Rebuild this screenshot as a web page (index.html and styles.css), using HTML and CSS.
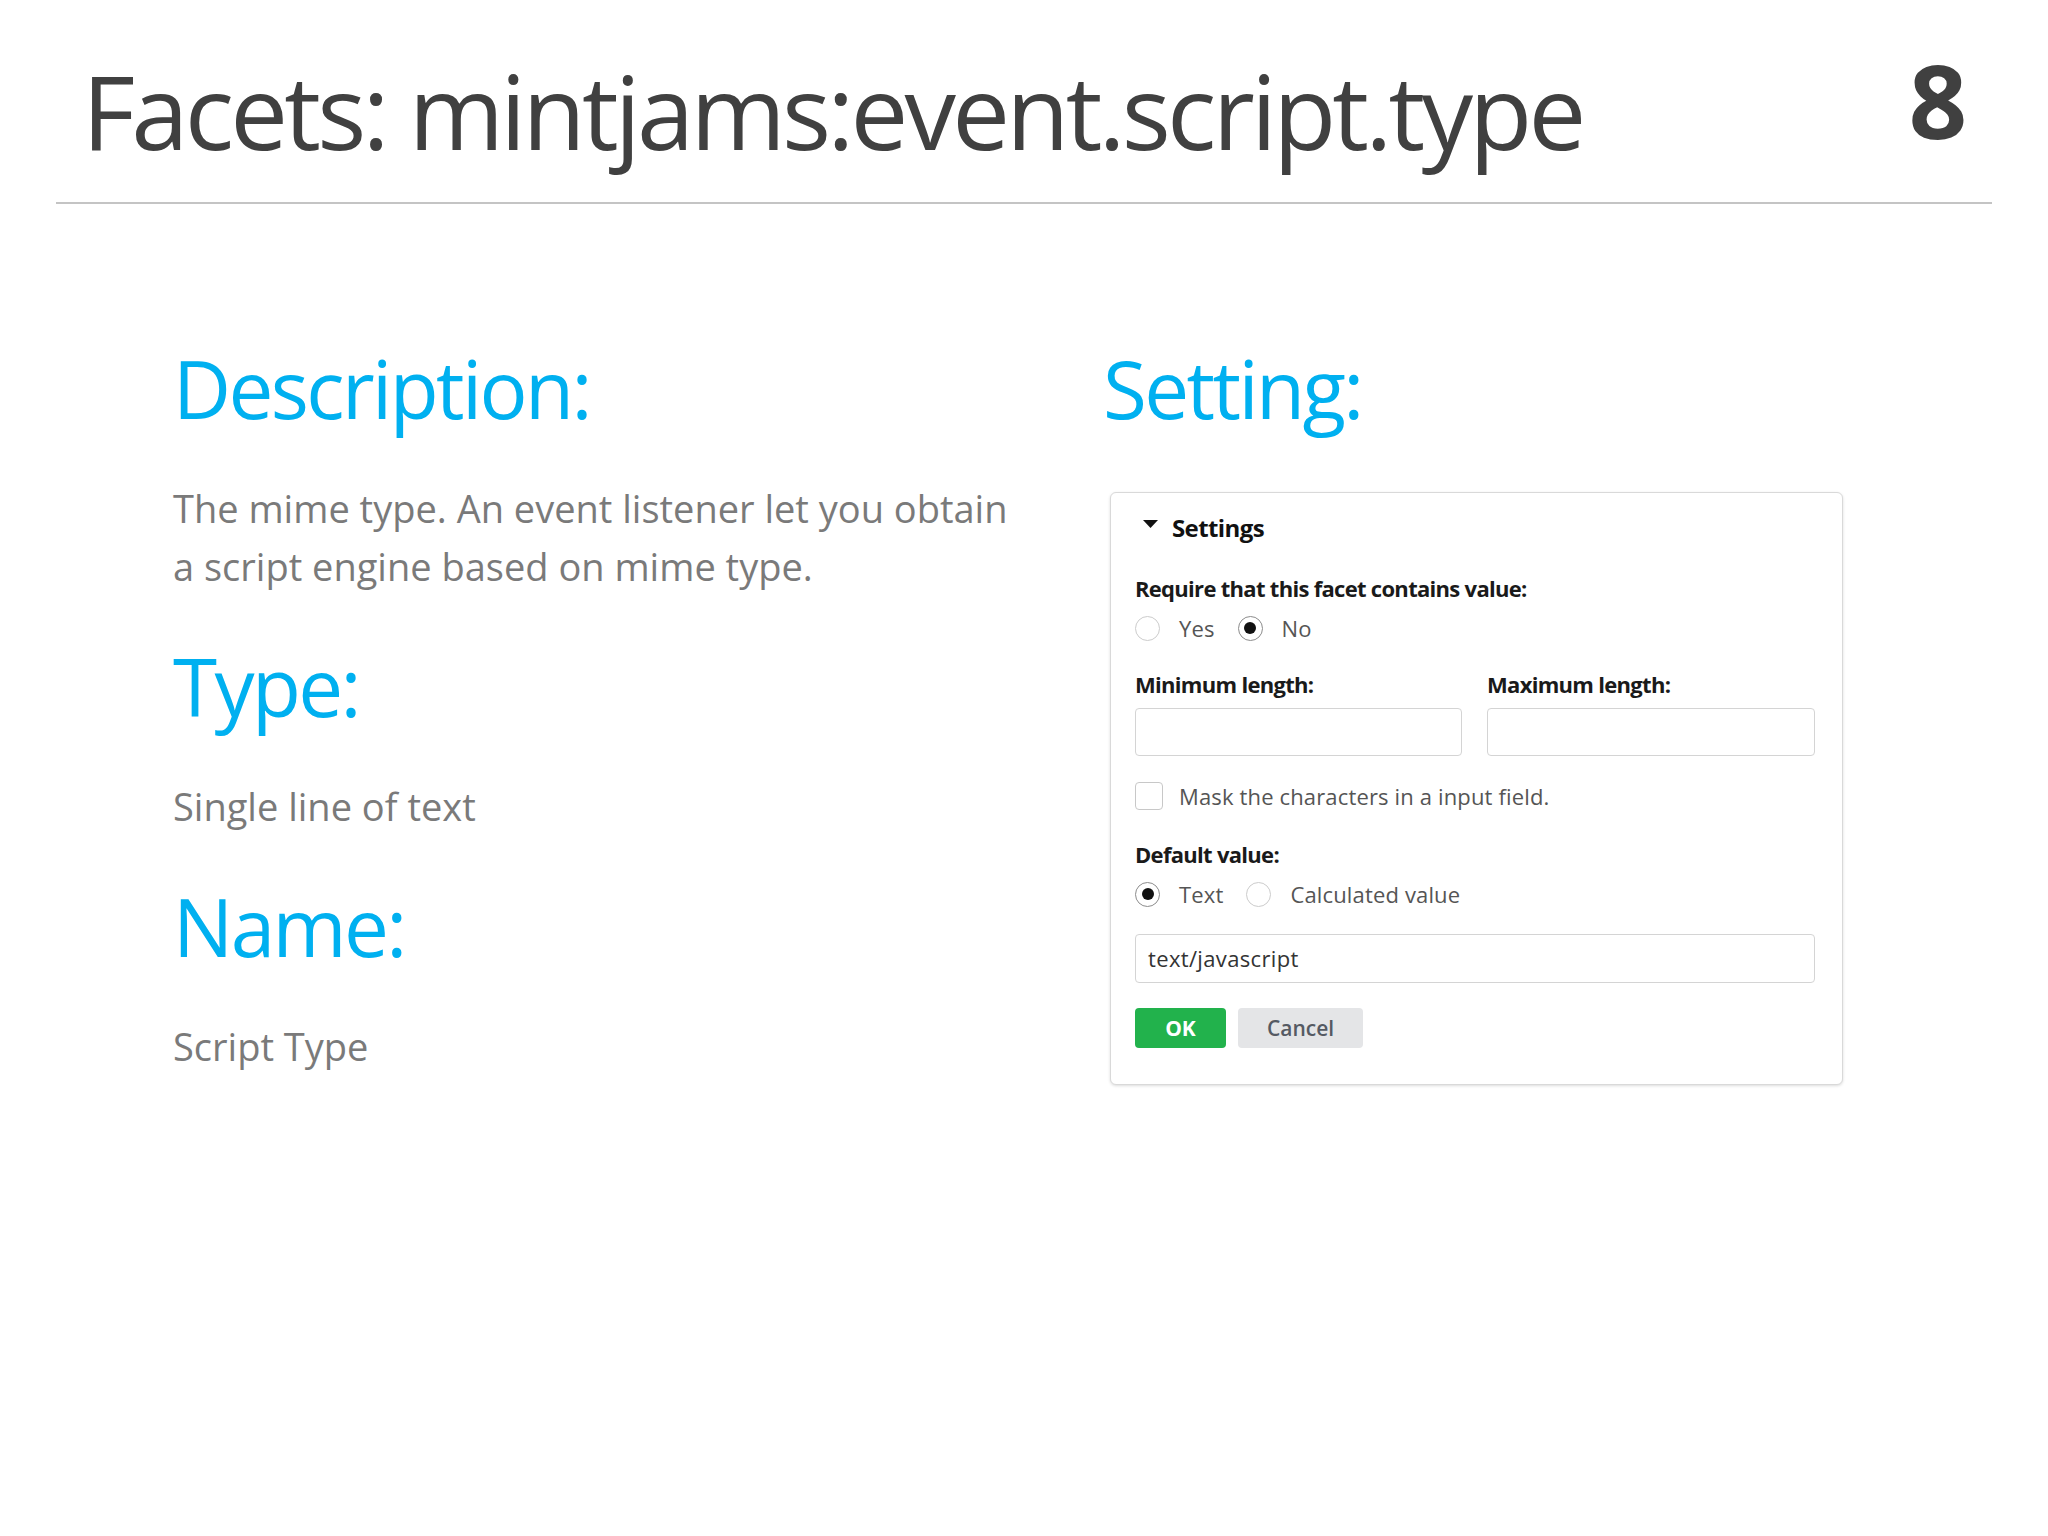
FILE: index.html
```html
<!DOCTYPE html>
<html lang="en">
<head>
<meta charset="utf-8">
<title>Facets: mintjams:event.script.type</title>
<link rel="stylesheet" href="styles.css">
</head>
<body>
<div class="slide">
  <header class="slide-header">
    <h1 class="slide-title">Facets: mintjams:event.script.type</h1>
    <div class="slide-number">8</div>
  </header>
  <main class="slide-body">
    <section class="col-left">
      <h2 class="heading">Description:</h2>
      <p class="text">The mime type. An event listener let you obtain<br>a script engine based on mime type.</p>
      <h2 class="heading heading-next">Type:</h2>
      <p class="text">Single line of text</p>
      <h2 class="heading heading-next">Name:</h2>
      <p class="text">Script Type</p>
    </section>
    <section class="col-right">
      <h2 class="heading">Setting:</h2>
      <div class="panel">
        <div class="panel-head">
          <svg class="caret" width="15" height="8" viewBox="0 0 15 8"><polygon points="0,0 15,0 7.5,8" fill="#111"/></svg>
          <span class="panel-title">Settings</span>
        </div>
        <div class="label label-first">Require that this facet contains value:</div>
        <div class="options">
          <span class="radio"></span><span class="opt">Yes</span>
          <span class="radio checked"></span><span class="opt">No</span>
        </div>
        <div class="pair">
          <div class="field">
            <div class="label">Minimum length:</div>
            <div class="input"></div>
          </div>
          <div class="field">
            <div class="label">Maximum length:</div>
            <div class="input"></div>
          </div>
        </div>
        <div class="check-row">
          <span class="checkbox"></span><span class="opt">Mask the characters in a input field.</span>
        </div>
        <div class="label label-default">Default value:</div>
        <div class="options">
          <span class="radio checked"></span><span class="opt">Text</span>
          <span class="radio"></span><span class="opt">Calculated value</span>
        </div>
        <div class="input input-text">text/javascript</div>
        <div class="buttons">
          <span class="btn btn-ok">OK</span>
          <span class="btn btn-cancel">Cancel</span>
        </div>
      </div>
    </section>
  </main>
</div>
</body>
</html>
```

FILE: styles.css
```css
html, body {
  margin: 0;
  padding: 0;
  background: #ffffff;
}

.slide {
  width: 2048px;
  height: 1536px;
  background: #ffffff;
  font-family: "Open Sans", "Noto Sans", sans-serif;
  overflow: hidden;
}

.slide-header {
  margin: 0 56px;
  padding: 48px 25px 30px 26px;
  border-bottom: 2px solid #c4c4c4;
  display: flex;
  justify-content: space-between;
  align-items: flex-start;
}

.slide-title {
  margin: 0;
  font-size: 103px;
  line-height: 124px;
  font-weight: 400;
  letter-spacing: -3.8px;
  color: #404040;
  white-space: nowrap;
}

.slide-number {
  margin-top: -10px;
  font-size: 102px;
  line-height: 124px;
  font-weight: 700;
  color: #404040;
}

.slide-body {
  display: grid;
  grid-template-columns: 930px 1fr;
  padding-left: 173px;
  padding-top: 136px;
}

.heading {
  margin: 0;
  font-size: 80px;
  line-height: 96px;
  font-weight: 400;
  letter-spacing: -2.6px;
  color: #00b0f0;
}

.heading-next {
  margin-top: 43px;
}

.text {
  margin: 43px 0 0 0;
  font-size: 38px;
  line-height: 58px;
  color: #7a7a7a;
}

/* Settings panel */
.panel {
  box-sizing: border-box;
  width: 733px;
  margin: 56px 0 0 7px;
  padding: 20px 20px 36px 24px;
  border: 1px solid #d9d9d9;
  border-radius: 6px;
  box-shadow: 0 1px 3px rgba(0, 0, 0, 0.14);
  background: #ffffff;
}

.panel-head {
  display: flex;
  align-items: flex-start;
  height: 30px;
}

.caret {
  margin: 7px 14px 0 8px;
  flex: none;
}

.panel-title {
  font-size: 24px;
  line-height: 30px;
  font-weight: 700;
  letter-spacing: -0.6px;
  color: #111111;
}

.label {
  font-size: 22px;
  line-height: 30px;
  font-weight: 700;
  letter-spacing: -0.7px;
  color: #1a1a1a;
}

.label-first {
  margin-top: 30px;
}

.label-default {
  margin-top: 29px;
}

.options {
  display: flex;
  align-items: center;
  height: 26px;
  margin-top: 12px;
}

.radio {
  box-sizing: border-box;
  width: 25px;
  height: 25px;
  border: 1px solid #cccccc;
  border-radius: 50%;
  margin-right: 19px;
  flex: none;
  display: flex;
  align-items: center;
  justify-content: center;
}

.radio.checked {
  border-color: #8c8c8c;
}

.radio.checked::after {
  content: "";
  width: 12px;
  height: 12px;
  border-radius: 50%;
  background: #111111;
}

.opt {
  font-size: 22px;
  line-height: 26px;
  letter-spacing: 0.15px;
  color: #555555;
  margin-right: 23px;
}

.pair {
  display: grid;
  grid-template-columns: 327px 328px;
  column-gap: 25px;
  margin-top: 28px;
}

.input {
  box-sizing: border-box;
  width: 100%;
  height: 48px;
  margin-top: 9px;
  border: 1px solid #d4d4d4;
  border-radius: 4px;
  background: #ffffff;
}

.check-row {
  display: flex;
  align-items: center;
  height: 28px;
  margin-top: 26px;
}

.checkbox {
  box-sizing: border-box;
  width: 28px;
  height: 28px;
  border: 1px solid #c8c8c8;
  border-radius: 4px;
  margin-right: 16px;
  flex: none;
}

.input-text {
  width: 680px;
  height: 49px;
  margin-top: 27px;
  padding-left: 12px;
  font-size: 22px;
  line-height: 47px;
  letter-spacing: 0.35px;
  color: #333333;
}

.buttons {
  display: flex;
  gap: 12px;
  margin-top: 25px;
}

.btn {
  height: 40px;
  line-height: 40px;
  text-align: center;
  border-radius: 4px;
  font-size: 21px;
}

.btn-ok {
  width: 91px;
  background: #22b24c;
  color: #ffffff;
  font-weight: 700;
}

.btn-cancel {
  width: 125px;
  background: #e4e5e7;
  color: #555a63;
  font-weight: 600;
}
```
